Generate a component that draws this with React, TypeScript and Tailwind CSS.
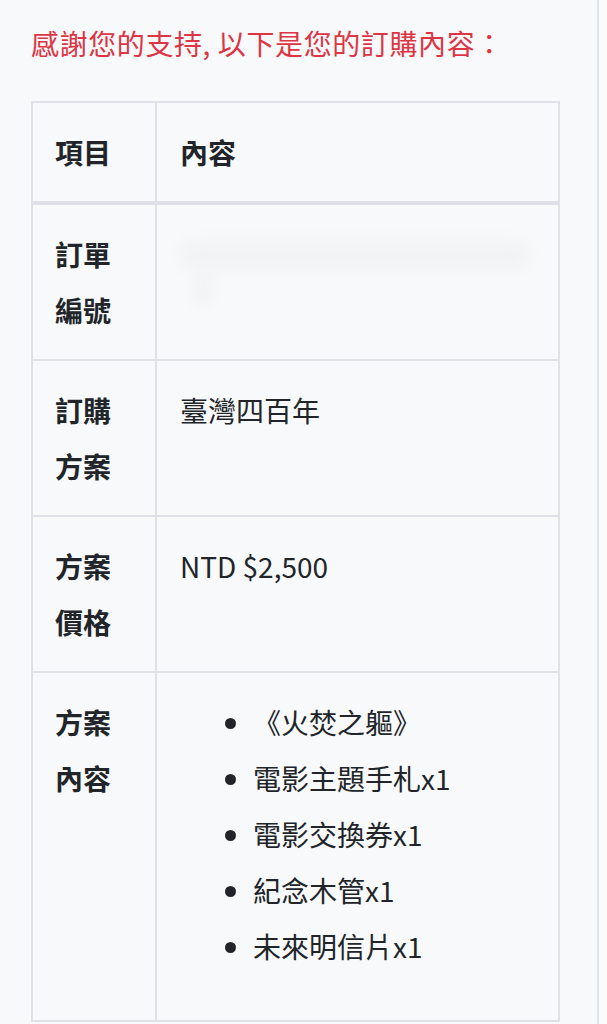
import React from "react";

const ROWS: { label: string[]; kind: "blur" | "text" | "list"; text?: string; items?: string[] }[] = [
  { label: ["訂單", "編號"], kind: "blur" },
  { label: ["訂購", "方案"], kind: "text", text: "臺灣四百年" },
  { label: ["方案", "價格"], kind: "text", text: "NTD $2,500" },
  {
    label: ["方案", "內容"],
    kind: "list",
    items: ["《火焚之軀》", "電影主題手札x1", "電影交換券x1", "紀念木管x1", "未來明信片x1"],
  },
];

export default function App() {
  return (
    <div
      className="flex min-h-[1024px] w-[607px] bg-[#fbfbfc] text-[#212529]"
      style={{ fontFamily: '"Noto Sans CJK TC", "Noto Sans", sans-serif' }}
    >
      <div className="w-[599px] shrink-0 border-r-2 border-[#e2e4e7] bg-[#f8f9fa] pl-[31px] pt-[22px]">
        <h1 className="text-[28px] font-normal leading-[42px] tracking-[0.6px] text-[#dc3545]">
          感謝您的支持, 以下是您的訂購內容：
        </h1>
        <table className="mt-[37px] w-[529px] border-collapse border-2 border-[#dee2e6] text-[28px] leading-[56px]">
          <thead>
            <tr>
              <th className="w-[124px] border-2 border-b-4 border-[#dee2e6] px-[22px] py-[21px] text-left font-bold">
                項目
              </th>
              <th className="border-2 border-b-4 border-[#dee2e6] px-[23px] py-[21px] text-left font-bold">
                內容
              </th>
            </tr>
          </thead>
          <tbody>
            {ROWS.map((r) => (
              <tr key={r.label.join("")}>
                <td className="border-2 border-[#dee2e6] px-[22px] py-[21px] align-top font-bold">
                  {r.label.map((l) => (
                    <div key={l}>{l}</div>
                  ))}
                </td>
                <td className="border-2 border-[#dee2e6] px-[23px] py-[21px] align-top">
                  {r.kind === "blur" && (
                    <div className="h-[112px] pt-[14px]">
                      <div className="h-[30px] w-[350px] rounded-full bg-[#f2f3f5] blur-[6px]" />
                      <div className="ml-[12px] h-[36px] w-[22px] rounded-full bg-[#f3f4f6] blur-[5px]" />
                    </div>
                  )}
                  {r.kind === "text" && <div className="h-[112px]">{r.text}</div>}
                  {r.kind === "list" && (
                    <ul className="mb-[25px] list-disc pl-[73px]">
                      {r.items!.map((it) => (
                        <li key={it}>{it}</li>
                      ))}
                    </ul>
                  )}
                </td>
              </tr>
            ))}
          </tbody>
        </table>
      </div>
    </div>
  );
}
